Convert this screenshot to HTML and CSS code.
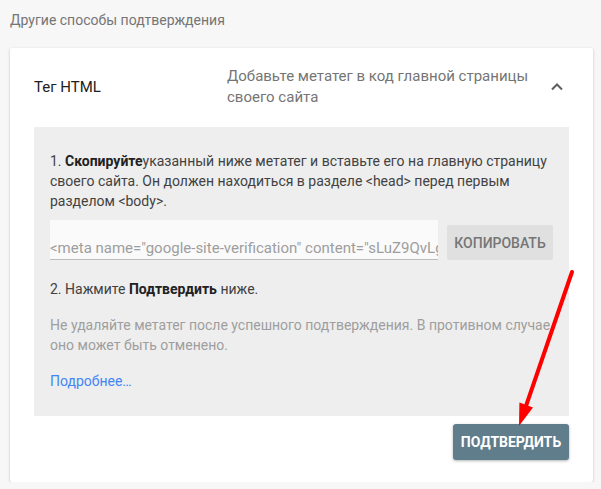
FILE: index.html
```html
<!DOCTYPE html>
<html lang="ru">
<head>
    <meta charset="UTF-8">
    <meta name="viewport" content="width=device-width, initial-scale=1.0">
    <title>Другие способы подтверждения</title>
    <link rel="stylesheet" href="styles.css">
</head>
<body>

<div class="page">
    <div class="section-title">Другие способы подтверждения</div>

    <div class="card">
        <div class="card-header">
            <div class="method-name">Тег HTML</div>
            <div class="method-desc">Добавьте метатег в код главной страницы своего сайта</div>
            <svg class="chevron" width="24" height="24" viewBox="0 0 24 24">
                <path d="M7 14.5l5-5 5 5" fill="none" stroke="#5f5f5f" stroke-width="2"/>
            </svg>
        </div>

        <div class="panel">
            <p class="step">1. <b>Скопируйте</b>указанный ниже метатег и вставьте его на главную страницу своего сайта. Он должен находиться в разделе &lt;head&gt; перед первым разделом &lt;body&gt;.</p>

            <div class="copy-row">
                <div class="meta-field">&lt;meta name="google-site-verification" content="sLuZ9QvLg4kR2xTq8Yw" /&gt;</div>
                <button class="copy-button">КОПИРОВАТЬ</button>
            </div>

            <p class="step step-2">2. Нажмите <b>Подтвердить</b> ниже.</p>

            <p class="note">Не удаляйте метатег после успешного подтверждения. В противном случае оно может быть отменено.</p>

            <a class="more-link" href="#">Подробнее…</a>
        </div>

        <div class="card-footer">
            <button class="verify-button">ПОДТВЕРДИТЬ</button>
        </div>
    </div>

    <!-- стрелка поверх карточки -->
    <svg class="arrow" width="601" height="489" viewBox="0 0 601 489">
        <line x1="572" y1="272" x2="526" y2="406" stroke="#ff0000" stroke-width="4" stroke-linecap="round"/>
        <polygon points="519,426 519.4,402.6 533,407.6" fill="#ff0000"/>
    </svg>
</div>

</body>
</html>
```

FILE: styles.css
```css
body {
    margin: 0;
    font-family: Roboto, "Noto Sans", Arial, sans-serif;
    background-color: #f7f7f7;
    color: #212121;
}

.page {
    position: relative;
    padding: 10px 8px 0 10px;
}

.section-title {
    font-size: 14px;
    line-height: 20px;
    color: #757575;
    margin-bottom: 18px;
}

.card {
    background-color: #fff;
    border-radius: 2px;
    box-shadow: 0 1px 3px rgba(0, 0, 0, 0.22);
    padding: 0 24px 22px;
}

.card-header {
    display: flex;
    align-items: center;
    padding: 18px 0 19px;
}

.method-name {
    flex: 0 0 193px;
    font-size: 15px;
    line-height: 21px;
    color: #212121;
}

.method-desc {
    width: 318px;
    font-size: 15px;
    line-height: 21px;
    color: #757575;
}

.chevron {
    margin-left: auto;
    display: block;
}

.panel {
    background-color: #eeeeee;
    padding: 24px 16px 25px;
}

.panel p {
    margin: 0;
}

.step {
    font-size: 14px;
    line-height: 20px;
    color: #424242;
}

.step b {
    font-weight: 700;
    color: #212121;
}

.copy-row {
    display: flex;
    align-items: flex-end;
    margin-top: 9px;
}

.meta-field {
    width: 388px;
    height: 40px;
    box-sizing: border-box;
    padding-bottom: 1px;
    display: flex;
    align-items: flex-end;
    background-color: #fafafa;
    border-bottom: 1px solid #bdbdbd;
    font-size: 15px;
    line-height: 20px;
    color: #9e9e9e;
    white-space: nowrap;
    overflow: hidden;
}

.copy-button {
    margin-left: 9px;
    width: 106px;
    height: 35px;
    border: none;
    border-radius: 2px;
    background-color: #e0e0e0;
    color: #757575;
    font-family: inherit;
    font-size: 14px;
    font-weight: 500;
    padding: 0;
}

.step-2 {
    margin-top: 19px !important;
}

.note {
    margin-top: 16px !important;
    font-size: 14px;
    line-height: 20px;
    color: #9e9e9e;
}

.more-link {
    display: inline-block;
    margin-top: 16px;
    font-size: 14px;
    line-height: 20px;
    color: #4285f4;
    text-decoration: none;
}

.card-footer {
    display: flex;
    justify-content: flex-end;
    padding-top: 8px;
}

.verify-button {
    width: 116px;
    height: 36px;
    border: none;
    border-radius: 3px;
    background-color: #607d8b;
    color: #fff;
    font-family: inherit;
    font-size: 14px;
    font-weight: 700;
    padding: 0;
    box-shadow: 0 1px 3px rgba(0, 0, 0, 0.3);
}

.arrow {
    position: absolute;
    top: 0;
    left: 0;
    pointer-events: none;
}
```
